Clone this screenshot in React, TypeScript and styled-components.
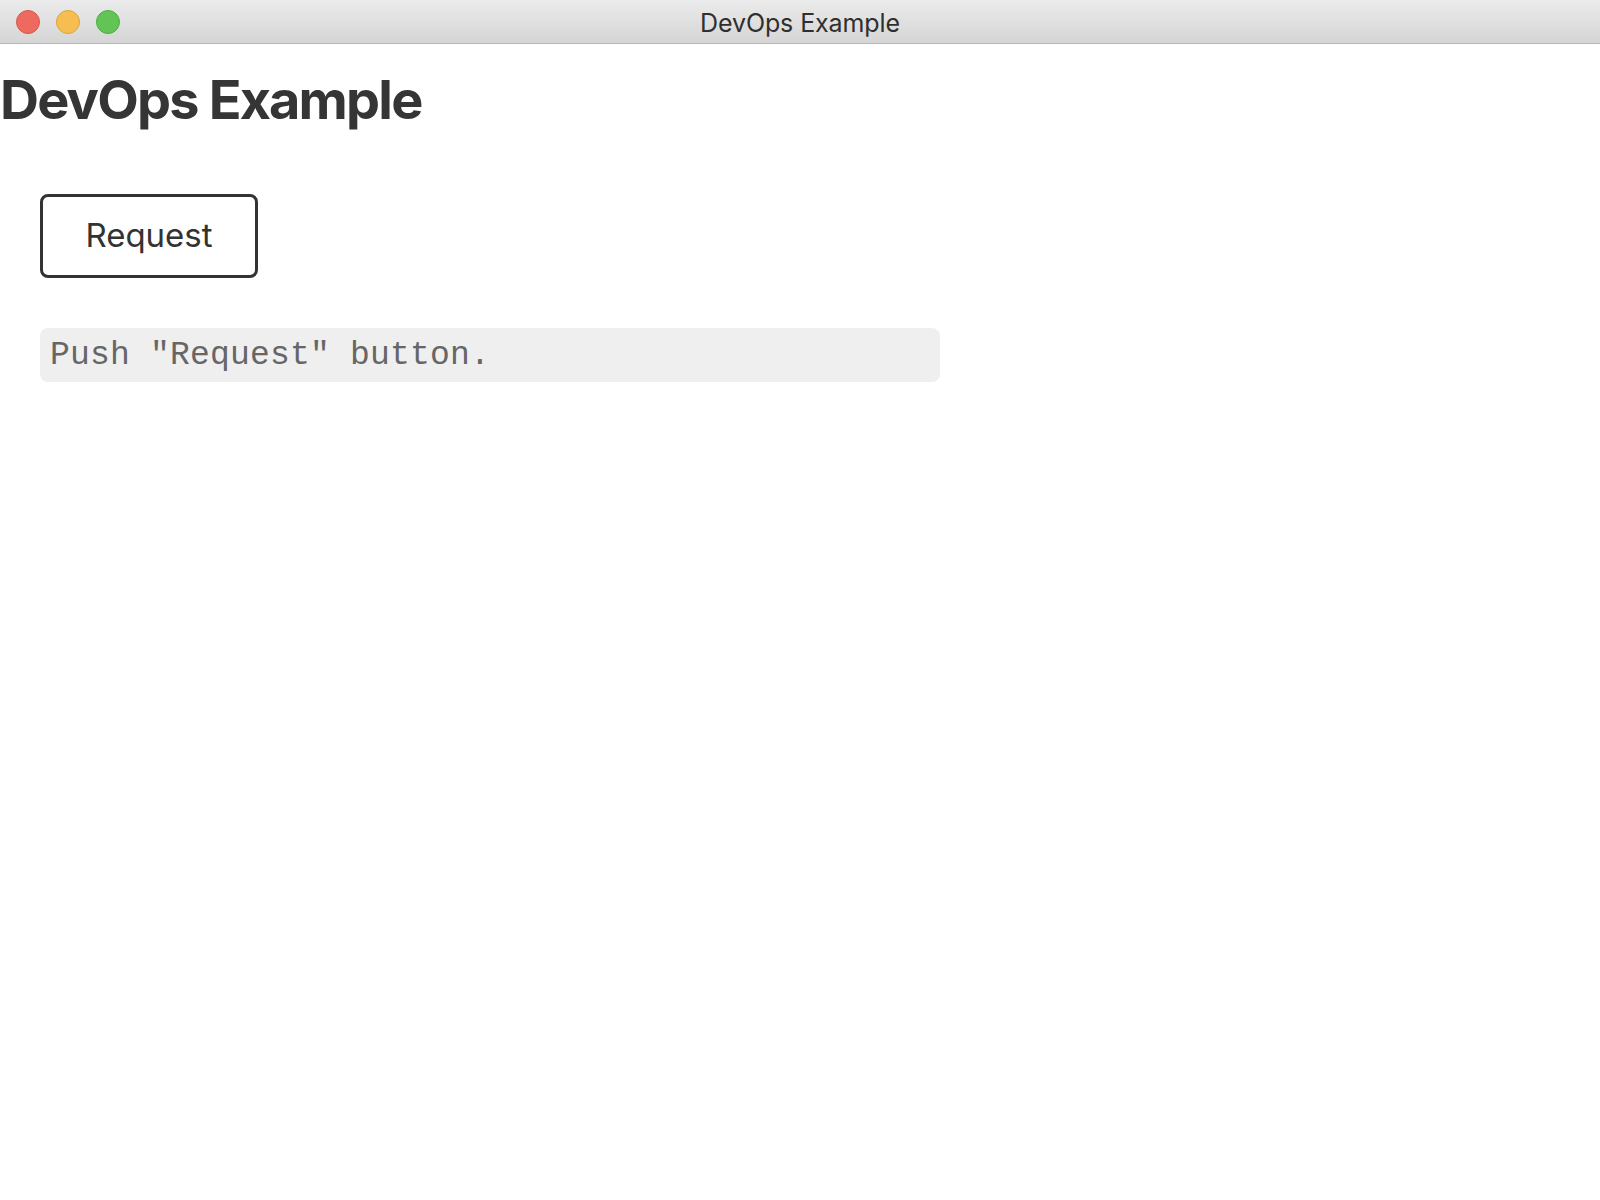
import React, { useState } from 'react';
import styled, { createGlobalStyle } from 'styled-components';

const GlobalStyle = createGlobalStyle`
  html, body {
    margin: 0;
    padding: 0;
    background: #ffffff;
  }
  body {
    font-family: Inter, "Noto Sans", "Liberation Sans", sans-serif;
    color: #333333;
  }
`;

const Window = styled.div`
  display: flex;
  flex-direction: column;
  width: 100%;
  min-height: 100vh;
  background: #ffffff;
`;

const TitleBar = styled.header`
  position: relative;
  display: flex;
  align-items: center;
  justify-content: center;
  height: 43px;
  background: linear-gradient(to bottom, #ebebeb, #d5d5d5);
  border-bottom: 1px solid #b8b8b8;
`;

const Lights = styled.div`
  position: absolute;
  left: 16px;
  top: 10px;
  display: flex;
  gap: 16px;
`;

const Light = styled.span<{ $fill: string; $edge: string }>`
  display: block;
  width: 24px;
  height: 24px;
  box-sizing: border-box;
  border-radius: 50%;
  background: ${props => props.$fill};
  border: 1px solid ${props => props.$edge};
`;

const WindowTitle = styled.div`
  font-size: 25px;
  letter-spacing: -0.1px;
  color: #2f2f2f;
  margin-top: 2px;
`;

const Heading = styled.h1`
  margin: 28px 0 0 0;
  font-size: 54px;
  line-height: 56px;
  font-weight: 700;
  letter-spacing: -1.8px;
  color: #353535;
`;

const Main = styled.main`
  display: flex;
  flex-direction: column;
  align-items: flex-start;
  gap: 50px;
  padding: 66px 40px 0 40px;
`;

const Button = styled.button`
  box-sizing: border-box;
  width: 218px;
  height: 84px;
  padding: 0 0 2px 0;
  background: #ffffff;
  border: 3px solid #333333;
  border-radius: 8px;
  font-family: Inter, "Noto Sans", "Liberation Sans", sans-serif;
  font-size: 33px;
  color: #333333;
  cursor: pointer;
`;

const Output = styled.pre`
  box-sizing: border-box;
  width: 900px;
  height: 54px;
  margin: 0;
  padding: 0 10px;
  display: flex;
  align-items: center;
  background: #efefef;
  border-radius: 8px;
  font-family: "Liberation Mono", "DejaVu Sans Mono", monospace;
  font-size: 33px;
  letter-spacing: 0.2px;
  color: #666666;
`;

const App: React.FC = () => {
  const [message, setMessage] = useState('Push "Request" button.');

  return (
    <>
      <GlobalStyle />
      <Window>
        <TitleBar>
          <Lights>
            <Light $fill="#ee6a5f" $edge="#d9574d" />
            <Light $fill="#f6be50" $edge="#dba43f" />
            <Light $fill="#61c454" $edge="#4fad43" />
          </Lights>
          <WindowTitle>DevOps Example</WindowTitle>
        </TitleBar>

        <Heading>DevOps Example</Heading>

        <Main>
          <Button onClick={() => setMessage('Requesting...')}>Request</Button>
          <Output>{message}</Output>
        </Main>
      </Window>
    </>
  );
};

export default App;
